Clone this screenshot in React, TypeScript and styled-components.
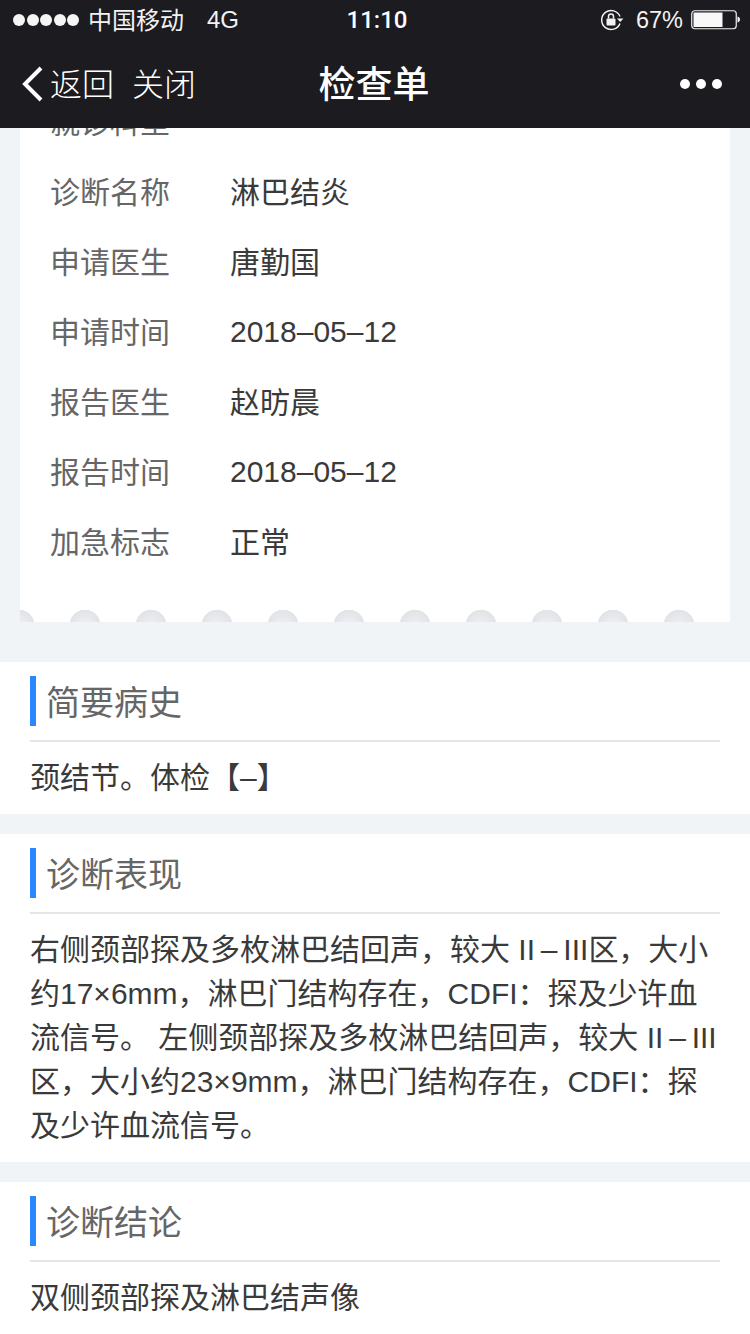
import type { ReactNode } from "react";
import styled, { createGlobalStyle } from "styled-components";

const GlobalStyle = createGlobalStyle`
  html, body {
    margin: 0;
    padding: 0;
    background: #f0f4f7;
  }
  * {
    box-sizing: border-box;
  }
`;

const FONT = `"Liberation Sans", "Noto Sans CJK SC", sans-serif`;

const Page = styled.div`
  width: 750px;
  height: 1334px;
  overflow: hidden;
  background: #f0f4f7;
  font-family: ${FONT};
`;

const Header = styled.header`
  position: relative;
  z-index: 10;
  height: 128px;
  background: #1b1b20;
  color: #fff;
`;

const StatusBar = styled.div`
  height: 40px;
  padding: 0 10px 0 13px;
  display: grid;
  grid-template-columns: 1fr auto 1fr;
  align-items: center;
  font-size: 24px;
  color: #f2f2f2;
`;

const StatusLeft = styled.div`
  display: flex;
  align-items: center;
`;

const Signal = styled.div`
  display: flex;
  gap: 1.5px;
  margin-right: 9px;
`;

const SignalDot = styled.span`
  width: 12px;
  height: 12px;
  border-radius: 50%;
  background: #f5f5f5;
`;

const Carrier = styled.span`
  margin-right: 23px;
  padding-bottom: 4px;
`;

const Time = styled.div`
  font-family: Roboto, sans-serif;
  font-size: 24px;
  font-weight: 500;
  color: #fff;
  margin-left: 1px;
`;

const StatusRight = styled.div`
  display: flex;
  align-items: center;
  justify-content: flex-end;
`;

const Percent = styled.span`
  margin: 0 8px 0 12px;
  font-size: 23.5px;
`;

const NavBar = styled.div`
  height: 88px;
  padding: 0 22px;
  display: grid;
  grid-template-columns: 1fr auto 1fr;
  align-items: center;
`;

const NavLeft = styled.div`
  display: flex;
  align-items: center;
  font-size: 32px;
  font-weight: 300;
`;

const NavLink = styled.span<{ $gap: number }>`
  margin-left: ${(p) => p.$gap}px;
  padding-bottom: 4px;
`;

const Title = styled.div`
  font-size: 37px;
  font-weight: 500;
  padding: 0 2px 4px 0;
`;

const More = styled.div`
  display: flex;
  justify-content: flex-end;
  gap: 6px;
  padding-right: 6px;
`;

const MoreDot = styled.span`
  width: 10px;
  height: 10px;
  border-radius: 50%;
  background: #fff;
`;

const Main = styled.main`
  margin-top: -41px;
`;

const Card = styled.div`
  margin: 0 20px 40px;
  background: #fff;
`;

const InfoRow = styled.div`
  height: 70px;
  padding-left: 30px;
  display: flex;
  align-items: center;
  font-size: 30px;
`;

const InfoLabel = styled.span`
  width: 180px;
  padding-bottom: 4px;
  color: #666;
`;

const InfoValue = styled.span<{ $latin: boolean }>`
  padding-bottom: ${(p) => (p.$latin ? 0 : 4)}px;
  color: #3a3a3a;
`;

const Perforation = styled.div`
  height: 13px;
  margin-top: 32px;
  background-image: radial-gradient(circle at 33px 16px, #eef0f3 0, #e1e3e6 15px, transparent 15.6px);
  background-size: 66px 13px;
  background-position: -34px 0;
  background-repeat: repeat-x;
`;

const Section = styled.section`
  margin-bottom: 20px;
  padding: 14px 30px 0;
  background: #fff;
`;

const SectionHead = styled.div`
  height: 66px;
  padding-bottom: 14px;
  border-bottom: 2px solid #e5e5e5;
`;

const SectionTitle = styled.h2`
  margin: 0;
  height: 50px;
  padding-left: 10px;
  border-left: 6px solid #2b87ff;
  font-size: 34px;
  line-height: 54px;
  font-weight: 400;
  color: #666;
`;

const SectionBody = styled.p`
  margin: 0;
  padding: 14px 0 14px;
  font-size: 30px;
  line-height: 44px;
  color: #3a3a3a;
`;

const infoRows = [
  ["就诊科室", ""],
  ["诊断名称", "淋巴结炎"],
  ["申请医生", "唐勤国"],
  ["申请时间", "2018–05–12"],
  ["报告医生", "赵昉晨"],
  ["报告时间", "2018–05–12"],
  ["加急标志", "正常"],
];

const Roman = styled.span`
  white-space: nowrap;
  word-spacing: -2.5px;
`;

const sections: { title: string; body: ReactNode }[] = [
  { title: "简要病史", body: "颈结节。体检【–】" },
  {
    title: "诊断表现",
    body: (
      <>
        右侧颈部探及多枚淋巴结回声，较大 <Roman>II – III</Roman>区，大小约17×6mm，淋巴门结构存在，CDFI：探及少许血流信号。
        左侧颈部探及多枚淋巴结回声，较大 <Roman>II – III</Roman>区，大小约23×9mm，淋巴门结构存在，CDFI：探及少许血流信号。
      </>
    ),
  },
  { title: "诊断结论", body: "双侧颈部探及淋巴结声像" },
];

const App = () => {
  return (
    <Page>
      <GlobalStyle />
      <Header>
        <StatusBar>
          <StatusLeft>
            <Signal>
              {[0, 1, 2, 3, 4].map((i) => (
                <SignalDot key={i} />
              ))}
            </Signal>
            <Carrier>中国移动</Carrier>
            <span>4G</span>
          </StatusLeft>
          <Time>11:10</Time>
          <StatusRight>
            <svg width="24" height="22" viewBox="0 0 24 22" fill="none">
              <path d="M20 7.5A9.5 9.5 0 1 0 20 14.5" stroke="#f2f2f2" strokeWidth="1.5" />
              <path d="M17 9.5h6.5L20.2 13z" fill="#f2f2f2" />
              <rect x="6.5" y="9.5" width="9" height="7" rx="1" fill="#f2f2f2" />
              <path d="M8.5 9.5V7.5a2.5 2.5 0 0 1 5 0v2" stroke="#f2f2f2" strokeWidth="1.5" />
            </svg>
            <Percent>67%</Percent>
            <svg width="49" height="20" viewBox="0 0 49 20" fill="none">
              <rect x="0.75" y="0.75" width="44.5" height="18" rx="3" stroke="#f2f2f2" strokeWidth="1.2" />
              <rect x="2.5" y="2.5" width="29" height="14.5" fill="#f8f8f8" />
              <path d="M46.5 6.5c2 .5 2.5 1.8 2.5 3s-.5 2.5-2.5 3z" fill="#f2f2f2" />
            </svg>
          </StatusRight>
        </StatusBar>
        <NavBar>
          <NavLeft>
            <svg width="22" height="36" viewBox="0 0 22 36" fill="none">
              <path d="M19 2L3 18l16 16" stroke="#fff" strokeWidth="4" />
            </svg>
            <NavLink $gap={6}>返回</NavLink>
            <NavLink $gap={18}>关闭</NavLink>
          </NavLeft>
          <Title>检查单</Title>
          <More>
            <MoreDot />
            <MoreDot />
            <MoreDot />
          </More>
        </NavBar>
      </Header>
      <Main>
        <Card>
          {infoRows.map(([label, value]) => (
            <InfoRow key={label}>
              <InfoLabel>{label}</InfoLabel>
              <InfoValue $latin={/^\d/.test(value)}>{value}</InfoValue>
            </InfoRow>
          ))}
          <Perforation />
        </Card>
        {sections.map((s) => (
          <Section key={s.title}>
            <SectionHead>
              <SectionTitle>{s.title}</SectionTitle>
            </SectionHead>
            <SectionBody>{s.body}</SectionBody>
          </Section>
        ))}
      </Main>
    </Page>
  );
};

export default App;
